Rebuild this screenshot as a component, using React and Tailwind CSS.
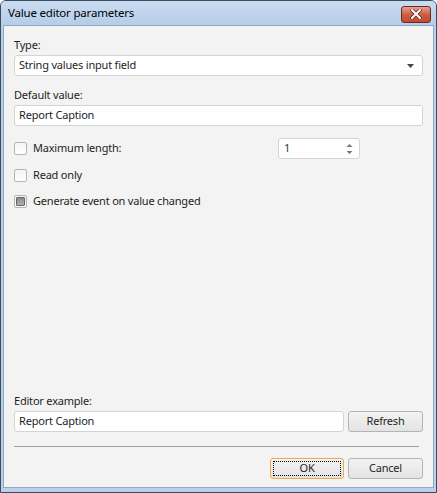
import React from "react";

function Check({ checked, label }) {
  return (
    <div className="flex items-center h-[20px]">
      <div className="w-[13px] h-[13px] rounded-[2px] border border-[#b5b5b5] bg-gradient-to-b from-[#f4f4f4] to-[#ffffff] flex items-center justify-center">
        {checked && <div className="w-[9px] h-[9px] rounded-[1px] border border-[#666] bg-gradient-to-b from-[#8c8c8c] to-[#b0b0b0]" />}
      </div>
      <span className="ml-[6px]">{label}</span>
    </div>
  );
}

function Button({ children, focused, className = "" }) {
  return (
    <div
      className={
        "h-[21px] rounded-[3px] border flex items-center justify-center bg-gradient-to-b from-[#f3f3f3] to-[#e3e3e3] " +
        (focused ? "border-[#f0a84c] p-[2px] " : "border-[#b4b4b4] ") +
        className
      }
    >
      {focused ? (
        <div className="w-full h-full border border-dotted border-black flex items-center justify-center">{children}</div>
      ) : (
        children
      )}
    </div>
  );
}

export default function App() {
  return (
    <div
      className="w-[437px] h-[493px] bg-[#b9d1ea] border border-[#3b4a5c] rounded-t-[6px] flex flex-col text-[11px] tracking-[-0.2px] text-[#1e1e1e] overflow-hidden"
      style={{ fontFamily: '"Noto Sans", "Open Sans", sans-serif' }}
    >
      <div className="h-[24px] flex items-center justify-between pl-[7px] pr-[5px] bg-gradient-to-b from-[#c9dcf1] to-[#b6cde8] shrink-0">
        <span className="text-[11.5px] text-black">Value editor parameters</span>
        <div className="w-[30px] h-[17px] mt-[2px] rounded-[3px] border border-[#6b2a22] bg-gradient-to-b from-[#e4a394] via-[#cd5d45] to-[#c24a34] flex items-center justify-center">
          <svg width="12" height="10" viewBox="0 0 12 10">
            <path d="M2 1 L10 9 M10 1 L2 9" stroke="#5b2a20" strokeWidth="3.4" strokeLinecap="square" />
            <path d="M2 1 L10 9 M10 1 L2 9" stroke="#ffffff" strokeWidth="2" strokeLinecap="square" />
          </svg>
        </div>
      </div>
      <div className="flex-1 mx-[2px] mb-[4px] border border-[#8fa8c4] bg-[#f3f3f3] flex flex-col px-[10px] pt-[11px] pb-[8px]">
        <div className="h-[16px] leading-[16px]">Type:</div>
        <div className="mt-[2px] h-[21px] bg-white border border-[#d4d4d4] rounded-[3px] flex items-center justify-between pl-[4px] pr-[8px]">
          <span>String values input field</span>
          <svg width="7" height="4" viewBox="0 0 7 4">
            <path d="M0 0 H7 L3.5 4 Z" fill="#444" />
          </svg>
        </div>
        <div className="mt-[11px] h-[16px] leading-[16px]">Default value:</div>
        <div className="mt-[2px] h-[21px] bg-white border border-[#d4d4d4] rounded-[3px] flex items-center pl-[4px]">Report Caption</div>
        <div className="mt-[12px] flex items-center justify-between">
          <Check label="Maximum length:" />
          <div className="mr-[63px] w-[82px] h-[21px] bg-white border border-[#d4d4d4] rounded-[3px] flex items-center justify-between pl-[5px] pr-[6px]">
            <span className="text-[#1e3a6e]">1</span>
            <svg width="7" height="12" viewBox="0 0 7 12">
              <path d="M0.5 4 H6.5 L3.5 1 Z" fill="#777" />
              <path d="M0.5 8 H6.5 L3.5 11 Z" fill="#777" />
            </svg>
          </div>
        </div>
        <div className="mt-[6px]">
          <Check label="Read only" />
        </div>
        <div className="mt-[6px]">
          <Check checked label="Generate event on value changed" />
        </div>
        <div className="flex-1" />
        <div className="h-[16px] leading-[16px]">Editor example:</div>
        <div className="mt-[2px] flex gap-[4px]">
          <div className="flex-1 h-[21px] bg-white border border-[#d4d4d4] rounded-[3px] flex items-center pl-[4px]">Report Caption</div>
          <Button className="w-[75px]">Refresh</Button>
        </div>
        <div className="mt-[14px] mr-[4px] h-px bg-[#a0a0a0]" />
        <div className="mt-[11px] flex justify-end gap-[4px]">
          <Button focused className="w-[74px]">OK</Button>
          <Button className="w-[75px]">Cancel</Button>
        </div>
      </div>
    </div>
  );
}
